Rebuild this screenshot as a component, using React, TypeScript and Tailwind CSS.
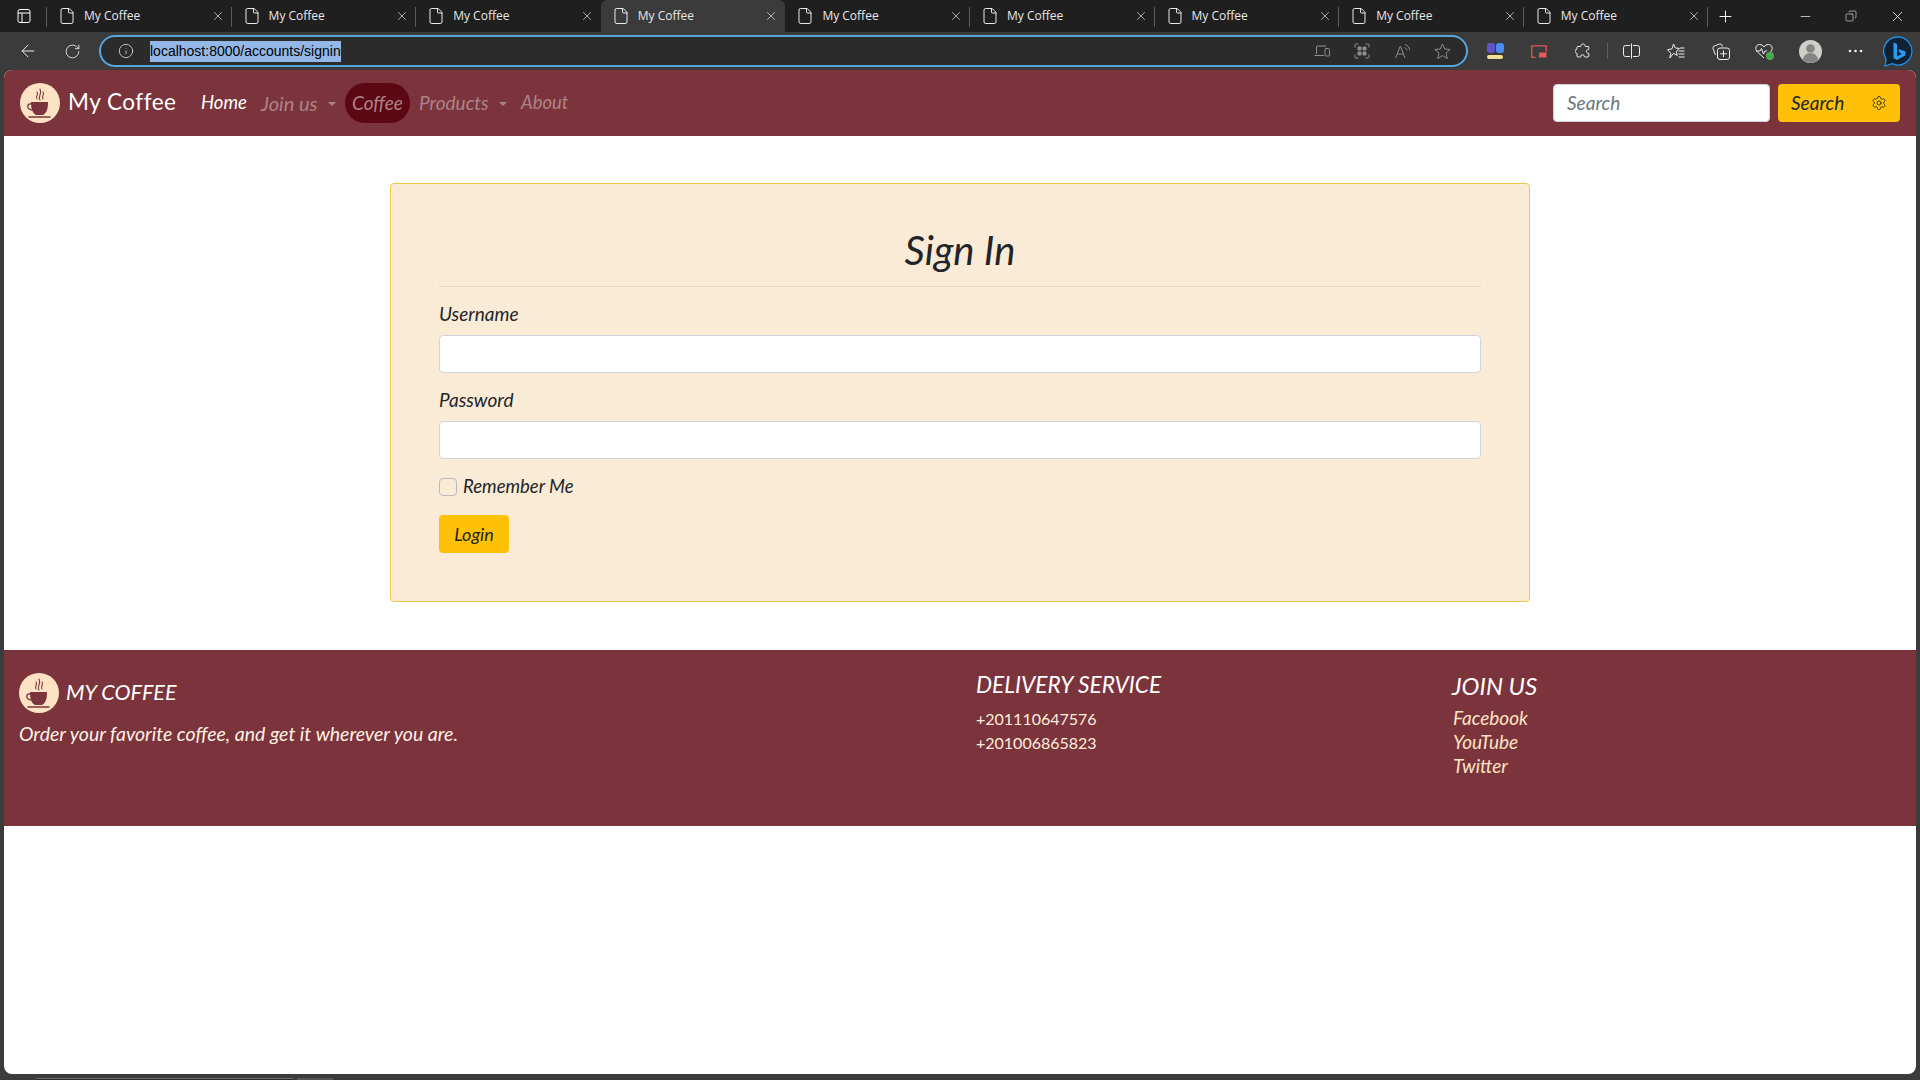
import React from "react";
import { File, X, Plus, Minus, ArrowLeft, RotateCw, Info, Settings, Copy } from "lucide-react";

const Logo = () => (
  <svg viewBox="0 0 40 40" className="w-10 h-10 shrink-0">
    <circle cx="20" cy="20" r="20" fill="#fde3c4" />
    <g fill="none" stroke="#7b333c" strokeWidth="1.1" strokeLinecap="round">
      <path d="M17 16c-2-3 2-4 0-7" />
      <path d="M20 17c-2.5-4 2.5-6 0-11" />
      <path d="M23 16c-2-3 2-4 0-7" />
    </g>
    <path d="M11 19h17c0 6-1 11-5 13h-7c-4-2-5-7-5-13z" fill="#7b333c" />
    <path d="M11 21c-4-1-5 5 1 6" fill="none" stroke="#7b333c" strokeWidth="1.3" />
    <path d="M9 34h21" stroke="#7b333c" strokeWidth="1.5" strokeLinecap="round" />
  </svg>
);

const Tab = ({ active, sep }: { active?: boolean; sep: boolean }) => (
  <div className={`relative flex items-center w-[184.6px] h-8 pl-[11px] pr-[7px] ${active ? "bg-[#3b3b3b] rounded-t-md" : ""}`}>
    <File size={18} strokeWidth={1.2} className="text-white shrink-0" />
    <span className="ml-[8px] text-[12px] text-[#e8e8e8] flex-1 font-['Open_Sans',sans-serif]">My Coffee</span>
    <X size={14} strokeWidth={1.2} className="text-[#e8e8e8] shrink-0" />
    {sep && <span className="absolute right-0 top-[7px] h-[20px] w-px bg-[#5a5a5a]" />}
  </div>
);

const NavLink = ({ children, caret, className = "" }: { children: React.ReactNode; caret?: boolean; className?: string }) => (
  <span className={`flex items-center h-10 ${className}`}>
    {children}
    {caret && <span className="ml-[10px] mt-[2px] w-0 h-0 border-x-[4px] border-x-transparent border-t-[4px] border-t-[#ae8388]" />}
  </span>
);

const Ico = ({ w, h = 16, className = "", children }: { w: number; h?: number; className?: string; children: React.ReactNode }) => (
  <svg width={w} height={h} viewBox={`0 0 ${w} ${h}`} fill="none" stroke="currentColor" strokeWidth="1" className={`shrink-0 ${className}`}>
    {children}
  </svg>
);

const inputClass = "block w-full h-[38px] bg-white border border-[#ced4da] rounded-[4px]";

export default function App() {
  return (
    <div className="h-screen w-full bg-[#3b3b3b] flex flex-col overflow-hidden font-['Lato',sans-serif] italic">
      {/* tab strip */}
      <div className="h-8 bg-[#1f1f1f] flex items-center not-italic shrink-0">
        <div className="w-[47px] h-8 flex items-center justify-center relative">
          <Ico w={14} h={16} className="text-white">
            <rect x="1" y="1.5" width="12" height="13" rx="2" />
            <path d="M1 5h12M5 5v9.5" />
          </Ico>
          <span className="absolute right-0 top-[7px] h-[20px] w-px bg-[#5a5a5a]" />
        </div>
        {[0, 1, 2, 3, 4, 5, 6, 7, 8].map((i) => (
          <Tab key={i} active={i === 3} sep={i !== 2 && i !== 3} />
        ))}
        <Plus size={19} strokeWidth={1.2} className="text-white ml-[8px]" />
        <div className="ml-auto flex items-center">
          <Minus size={15} strokeWidth={1.1} className="text-white mr-[32px]" />
          <Copy size={12} strokeWidth={1.1} className="text-white mr-[32px] -scale-x-100" />
          <X size={17} strokeWidth={1.1} className="text-white mr-[14px]" />
        </div>
      </div>
      {/* toolbar */}
      <div className="h-[38px] flex items-center not-italic shrink-0">
        <ArrowLeft size={20} strokeWidth={1.2} className="text-[#eeeeee] ml-[18px]" />
        <RotateCw size={17} strokeWidth={1.2} className="text-[#eeeeee] ml-[26px]" />
        <div className="ml-[18px] w-[1369px] h-[32px] rounded-full border-2 border-[#59a4dc] bg-[#2b2b2b] flex items-center pl-[17px] pr-[15px] shrink-0">
          <Info size={16} strokeWidth={1.2} className="text-[#e4e4e4]" />
          <span className="ml-[16px] h-[21px] leading-[21px] bg-[#93b8e8] text-[14px] text-black font-['Liberation_Sans',sans-serif]">localhost:8000/accounts/signin</span>
          <div className="ml-auto flex items-center text-[#8f8f8f]">
            <Ico w={16} h={14}>
              <path d="M2.5 10V3a1 1 0 0 1 1-1H12M0.5 11.5h9.5" />
              <rect x="11" y="4.5" width="4.5" height="7.5" rx="1" />
            </Ico>
            <Ico w={16} className="ml-[24px]">
              <path d="M1 4.5V2a1 1 0 0 1 1-1h2.5M11.5 1H14a1 1 0 0 1 1 1v2.5M1 11.5V14a1 1 0 0 0 1 1h2.5M11.5 15H14a1 1 0 0 0 1-1v-2.5" />
              <g fill="currentColor" stroke="none">
                <rect x="3.5" y="3.5" width="4" height="4" rx="1" />
                <rect x="8.5" y="3.5" width="4" height="4" rx="1" />
                <rect x="3.5" y="8.5" width="4" height="4" rx="1" />
                <rect x="8.5" y="8.5" width="4" height="4" rx="1" />
              </g>
            </Ico>
            <Ico w={16} className="ml-[25px]">
              <path d="M0.7 15 5 3.5h.6L10 15M2.3 11h6.2" />
              <path d="M9.5 4.5c1.4.5 2.2 1.7 2.4 3M10 1.5c2.6.7 4.5 3 4.8 5.7" />
            </Ico>
            <Ico w={17} className="ml-[23px]">
              <path d="M8.5 1 10.7 6l5.5.5-4.2 3.6 1.3 5.4-4.8-2.9-4.8 2.9L5 10.1.8 6.5 6.3 6z" strokeLinejoin="round" />
            </Ico>
          </div>
        </div>
        <div className="ml-[19px] relative w-[17px] h-[16px] shrink-0">
          <span className="absolute left-0 top-0 w-[8px] h-[10px] rounded-[3px] bg-[#6252c8]" />
          <span className="absolute right-0 top-0 w-[8px] h-[10px] rounded-[3px] bg-[#4a8cf0]" />
          <span className="absolute left-0 bottom-0 w-[16px] h-[4px] rounded-sm bg-[#f5df96]" />
        </div>
        <Ico w={16} h={13} className="ml-[27px] text-[#e8555b]">
          <path d="M4.5 12.5H.8V.8h14.4v5.7" strokeWidth="1.3" />
          <rect x="8" y="7.5" width="7.5" height="5" fill="#e8555b" stroke="none" />
        </Ico>
        <Ico w={16} className="ml-[28px] text-[#f0f0f0]">
          <path d="M6 2.5c0-2 4-2 4 0 0 .5 0 1 .5 1H13a.8.8 0 0 1 .8.8V6c0 .6-.5.7-1 .7-2 0-2 3.4 0 3.4.5 0 1 .1 1 .7v2.2a1 1 0 0 1-1 1h-3c-.6 0-.6-.5-.6-.9 0-1.800-3.400-1.800-3.400 0 0 .4 0 .9-.6.9H3a1 1 0 0 1-1-1v-2.400C2 10 1.500 10 1 10c-1.300 0-1.300-3.400 0-3.400.5 0 1 0 1-.6V4.300a.8.8 0 0 1 .8-.8h2.700c.5 0 .5-.5.5-1z" strokeLinejoin="round" />
        </Ico>
        <span className="ml-[16px] w-px h-[16px] bg-[#5f5f5f] shrink-0" />
        <Ico w={17} className="ml-[15px] text-[#f0f0f0]">
          <path d="M7 2.500H2.500a2 2 0 0 0-2 2v7a2 2 0 0 0 2 2H7M10 2.500h4.500a2 2 0 0 1 2 2v7a2 2 0 0 1-2 2H10M8.500 .5v15" />
        </Ico>
        <Ico w={18} className="ml-[27px] text-[#f0f0f0]">
          <path d="M6.500 1 8.300 5l4.200.4-3.200 2.900.9 4.200-3.700-2.200L2.800 15l1-4.700L.6 6.700 5 5.800z" strokeLinejoin="round" />
          <path d="M11.500 8h6M11.500 11h6M11.500 14h6M13 5h4.500" />
        </Ico>
        <Ico w={18} h={17} className="ml-[27px] text-[#f0f0f0]">
          <path d="M3.500 12 1 5.500a2 2 0 0 1 1.100-2.400L7.500 1a2 2 0 0 1 2.400 1.100l.6 1.400" />
          <rect x="5.500" y="5" width="12" height="11.500" rx="2.500" />
          <path d="M11.500 7.500v6.500M8.200 10.750h6.600" />
        </Ico>
        <div className="relative ml-[25px] shrink-0">
          <Ico w={18} className="text-[#f0f0f0]">
            <path d="M9 15 2.500 9C-.5 6 .8 1.500 4.500 1.500 6.500 1.500 8 2.500 9 4c1-1.500 2.500-2.500 4.500-2.500C17.200 1.500 18.500 6 15.500 9L14 10.500" />
            <path d="M1 8h4l1.500-2.500L8.500 11l1.500-3h2" />
          </Ico>
          <span className="absolute -right-[1px] -bottom-[1px] w-[8px] h-[8px] rounded-full bg-[#4ca84c]" />
        </div>
        <svg width="23" height="23" viewBox="0 0 23 23" className="ml-[26px] shrink-0">
          <circle cx="11.500" cy="11.500" r="11.500" fill="#cfcec9" />
          <circle cx="11.500" cy="8.500" r="4.300" fill="#858585" />
          <path d="M3.800 20c.6-5 4-6.800 7.700-6.800s7.100 1.800 7.700 6.800a11.500 11.500 0 0 1-15.400 0z" fill="#858585" />
        </svg>
        <svg width="15" height="4" viewBox="0 0 15 4" className="ml-[26px] shrink-0" fill="#eeeeee">
          <circle cx="2" cy="2" r="1.300" />
          <circle cx="7.500" cy="2" r="1.300" />
          <circle cx="13" cy="2" r="1.300" />
        </svg>
        <svg width="30" height="31" viewBox="0 0 30 31" className="ml-[20px] shrink-0">
          <path d="M15 1a14 14 0 1 1-6 26.700L2 30l1.200-7A14 14 0 0 1 15 1z" fill="#0f2233" stroke="#1e90e8" strokeWidth="1.300" />
          <path d="M10.500 6.500 14 8v12.500l5-2.700-2.300-1.100-1.500-3.600 7.300 2.500v3.700L14 24l-3.500-2z" fill="#2b9cf2" />
        </svg>
      </div>
      {/* page */}
      <div className="flex-1 mx-1 bg-white rounded-lg overflow-hidden flex flex-col min-h-0">
        <nav className="h-[66px] bg-[#7b333c] flex items-center pl-4 pr-4 shrink-0">
          <Logo />
          <span className="ml-2 text-[22.500px] text-white not-italic w-[108px] whitespace-nowrap tracking-[0.5px] -mt-[2px]">My Coffee</span>
          <div className="ml-[25px] flex items-center">
            <NavLink className="text-white text-[18.500px] w-[60px]">Home</NavLink>
            <NavLink caret className="text-[#ae8388] text-[20px] w-[84px]">Join us</NavLink>
            <NavLink className="w-[65px] rounded-[20px] bg-[#5c0712] text-[#ae8388] text-[19px] justify-center">Coffee</NavLink>
            <NavLink caret className="ml-[9px] text-[#ae8388] text-[19px] w-[102px]">Products</NavLink>
            <NavLink className="text-[#ae8388] text-[18.500px]">About</NavLink>
          </div>
          <div className="ml-auto flex items-center">
            <div className="w-[217px] h-[38px] bg-white border border-[#ced4da] rounded-[4px] flex items-center pl-[13px] text-[19px] text-[#6c757d]">Search</div>
            <div className="ml-2 w-[122px] h-[38px] bg-[#ffc107] rounded-[4px] flex items-center pl-[13px] text-[19px] text-[#212529]">
              Search
              <Settings size={16} strokeWidth={1.2} className="ml-auto mr-[13px]" />
            </div>
          </div>
        </nav>
        <main className="pt-[47px] pb-[48px] flex justify-center shrink-0">
          <div className="w-[1140px] h-[419px] bg-[#faebd7] border border-[#f5c542] rounded-[4px] px-12 pt-[47px] text-[#212529]">
            <h1 className="text-center text-[40px] leading-[38px] h-[55px] border-b border-[#e0d6c8] box-content">Sign In</h1>
            <label className="block mt-[15px] h-[24px] leading-[24px] text-[19px]">Username</label>
            <div className="mt-[9px]"><div className={inputClass} /></div>
            <label className="block mt-[15px] h-[24px] leading-[24px] text-[19px]">Password</label>
            <div className="mt-[9px]"><div className={inputClass} /></div>
            <div className="mt-[19px] h-[18px] flex items-center">
              <span className="w-[18px] h-[18px] bg-[#faebd7] border border-[#b9bcbf] rounded-[4px]" />
              <span className="ml-[6px] text-[18.500px]">Remember Me</span>
            </div>
            <div className="mt-[19px] w-[70px] h-[38px] bg-[#ffc107] rounded-[4px] flex items-center justify-center text-[18px]">Login</div>
          </div>
        </main>
        <footer className="h-[176px] bg-[#7b333c] flex text-white shrink-0">
          <div className="w-[972px] pl-[15px] pt-[23px]">
            <div className="flex items-center">
              <Logo />
              <span className="ml-[7px] text-[21.500px] -mt-[2px]">MY COFFEE</span>
            </div>
            <p className="mt-[9px] text-[19.500px] leading-[24px] text-[#fdf1e3]">Order your favorite coffee, and get it wherever you are.</p>
          </div>
          <div className="w-[476px] pt-[21px]">
            <div className="text-[22.700px] leading-[28px]">DELIVERY SERVICE</div>
            <div className="mt-[8px] text-[#fdeedd] text-[16px] leading-[24px] not-italic">+201110647576</div>
            <div className="text-[#fdeedd] text-[16px] leading-[24px] not-italic">+201006865823</div>
          </div>
          <div className="pt-[22px]">
            <div className="text-[24px] leading-[28px]">JOIN US</div>
            <div className="mt-[6px] pl-px text-[19px] leading-[24px] text-[#fde3c4]">Facebook</div>
            <div className="pl-px text-[19px] leading-[24px] text-[#fde3c4]">YouTube</div>
            <div className="pl-px text-[19px] leading-[24px] text-[#fde3c4]">Twitter</div>
          </div>
        </footer>
      </div>
      <div className="h-[6px] pt-[4px] flex shrink-0">
        <span className="ml-[36px] w-[257px] h-[2px] bg-[#2a2a2a] border-t border-[#6e6e6e]" />
        <span className="ml-[4px] w-[36px] h-[2px] bg-[#555555]" />
      </div>
    </div>
  );
}
